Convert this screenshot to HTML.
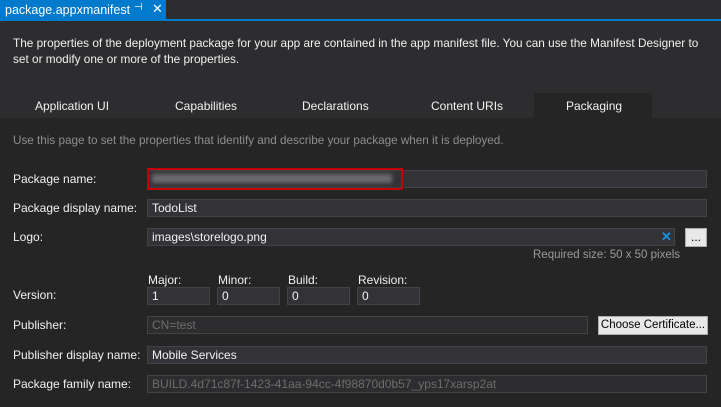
<!DOCTYPE html>
<html><head><style>
*{margin:0;padding:0;box-sizing:border-box}
body{width:721px;height:407px;background:#252526;font-family:"Liberation Sans",sans-serif;font-size:12px;color:#f1f1f1;position:relative;overflow:hidden}
.a{position:absolute;white-space:nowrap}
.inp{position:absolute;background:#333337;border:1px solid #434346;height:18px;padding:1px 0 0 4px;white-space:nowrap;overflow:hidden}
.lbl{position:absolute;left:13px;color:#f1f1f1;white-space:nowrap}
.dis{color:#6d6d6d}
.btn{position:absolute;background:#e8e8e8;border:1px solid #adadad;color:#000;text-align:center;height:19px;line-height:16px;white-space:nowrap;overflow:hidden}
</style></head><body>
<div class="a" style="left:0;top:0;width:721px;height:21px;background:#2d2d30"></div>
<div class="a" style="left:0;top:0;width:166px;height:21px;background:#007acc;color:#fff;padding:3px 0 0 5px;font-size:12.5px">package.appxmanifest<span style="position:absolute;left:134px;top:2px;font-size:10px">⊣</span><span style="position:absolute;left:152px;top:1px;font-size:13px">✕</span></div>
<div class="a" style="left:0;top:19px;width:721px;height:2px;background:#007acc"></div>
<div class="a" style="left:0;top:21px;width:721px;height:97px;background:#2d2d30"></div>
<div class="a" style="left:13px;top:35px;width:700px;line-height:16px;font-size:11.8px;white-space:normal">The properties of the deployment package for your app are contained in the app manifest file. You can use the Manifest Designer to set or modify one or more of the properties.</div>
<div class="a" style="left:534px;top:93px;width:118px;height:25px;background:#252526"></div>
<div class="a" style="left:35px;top:99px">Application UI</div>
<div class="a" style="left:175px;top:99px">Capabilities</div>
<div class="a" style="left:302px;top:99px">Declarations</div>
<div class="a" style="left:431px;top:99px">Content URIs</div>
<div class="a" style="left:566px;top:99px">Packaging</div>
<div class="a" style="left:13px;top:134px;color:#8e8e8e;font-size:11.7px">Use this page to set the properties that identify and describe your package when it is deployed.</div>

<div class="lbl" style="top:172px">Package name:</div>
<div class="inp" style="left:147px;top:170px;width:560px"></div>
<div class="a" style="left:152px;top:174px;width:240px;height:9px;background:#6a6a6e;filter:blur(2px)"></div>
<div class="a" style="left:147px;top:168px;width:256px;height:22px;border:2px solid #c50000"></div>

<div class="lbl" style="top:201px">Package display name:</div>
<div class="inp" style="left:147px;top:199px;width:560px">TodoList</div>

<div class="lbl" style="top:230px">Logo:</div>
<div class="inp" style="left:147px;top:228px;width:528px">images\storelogo.png</div>
<div class="a" style="left:661px;top:229px;color:#1e90e0;font-size:13px;font-weight:bold">✕</div>
<div class="btn" style="left:685px;top:228px;width:22px">...</div>
<div class="a" style="left:533px;top:249px;color:#9a9a9a;font-size:11.5px">Required size: 50 x 50 pixels</div>

<div class="a" style="left:148px;top:273px">Major:</div>
<div class="a" style="left:218px;top:273px">Minor:</div>
<div class="a" style="left:288px;top:273px">Build:</div>
<div class="a" style="left:358px;top:273px">Revision:</div>
<div class="lbl" style="top:288px">Version:</div>
<div class="inp" style="left:147px;top:287px;width:63px">1</div>
<div class="inp" style="left:217px;top:287px;width:63px">0</div>
<div class="inp" style="left:287px;top:287px;width:63px">0</div>
<div class="inp" style="left:357px;top:287px;width:63px">0</div>

<div class="lbl" style="top:318px">Publisher:</div>
<div class="inp dis" style="left:147px;top:316px;width:441px;background:#2d2d30">CN=test</div>
<div class="btn" style="left:598px;top:316px;width:110px;font-size:11.5px">Choose Certificate...</div>

<div class="lbl" style="top:348px">Publisher display name:</div>
<div class="inp" style="left:147px;top:346px;width:560px">Mobile Services</div>

<div class="lbl" style="top:377px">Package family name:</div>
<div class="inp dis" style="left:147px;top:375px;width:560px;background:#2d2d30">BUILD.4d71c87f-1423-41aa-94cc-4f98870d0b57_yps17xarsp2at</div>
</body></html>
